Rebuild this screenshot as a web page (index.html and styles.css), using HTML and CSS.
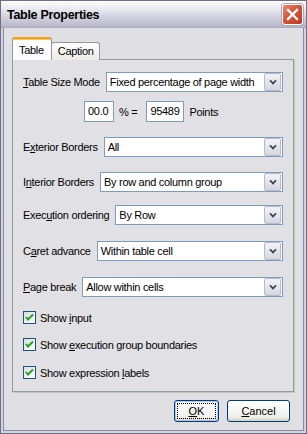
FILE: index.html
```html
<!DOCTYPE html>
<html lang="en">
<head>
    <meta charset="UTF-8" />
    <title>Table Properties</title>
    <link rel="stylesheet" href="styles.css">
</head>
<body>
    <div class="window">
        <div class="titlebar">
            <span class="title">Table Properties</span>
            <span class="closeBtn">
                <svg width="13" height="13" viewBox="0 0 13 13">
                    <path d="M2 2 L11 11 M11 2 L2 11" stroke="#fff" stroke-width="2.4" stroke-linecap="square" />
                </svg>
            </span>
        </div>
        <div class="client">
            <div class="tabs">
                <div class="tab active">Table</div>
                <div class="tab">Caption</div>
            </div>
            <div class="panel">
                <div class="row r1">
                    <label><u>T</u>able Size Mode</label>
                    <div class="combo"><span>Fixed percentage of page width</span><i class="drop"></i></div>
                </div>
                <div class="row numbers">
                    <span class="box small">00.0</span>
                    <span class="eq">% =</span>
                    <span class="box">95489</span>
                    <span>Points</span>
                </div>
                <div class="row r3">
                    <label>E<u>x</u>terior Borders</label>
                    <div class="combo"><span>All</span><i class="drop"></i></div>
                </div>
                <div class="row r4">
                    <label>I<u>n</u>terior Borders</label>
                    <div class="combo"><span>By row and column group</span><i class="drop"></i></div>
                </div>
                <div class="row r5">
                    <label>Exec<u>u</u>tion ordering</label>
                    <div class="combo"><span>By Row</span><i class="drop"></i></div>
                </div>
                <div class="row r6">
                    <label>C<u>a</u>ret advance</label>
                    <div class="combo"><span>Within table cell</span><i class="drop"></i></div>
                </div>
                <div class="row r7">
                    <label><u>P</u>age break</label>
                    <div class="combo"><span>Allow within cells</span><i class="drop"></i></div>
                </div>
                <div class="check c1">
                    <span class="box13"><svg width="11" height="11" viewBox="0 0 11 11"><path d="M2 5 L4 7.5 L9 2.5" fill="none" stroke="#21a121" stroke-width="2" /></svg></span>
                    <span>Show <u>i</u>nput</span>
                </div>
                <div class="check c2">
                    <span class="box13"><svg width="11" height="11" viewBox="0 0 11 11"><path d="M2 5 L4 7.5 L9 2.5" fill="none" stroke="#21a121" stroke-width="2" /></svg></span>
                    <span>Show <u>e</u>xecution group boundaries</span>
                </div>
                <div class="check c3">
                    <span class="box13"><svg width="11" height="11" viewBox="0 0 11 11"><path d="M2 5 L4 7.5 L9 2.5" fill="none" stroke="#21a121" stroke-width="2" /></svg></span>
                    <span>Show expression <u>l</u>abels</span>
                </div>
            </div>
            <div class="buttons">
                <button class="btn default"><span class="focus"><u>O</u>K</span></button>
                <button class="btn cancel"><u>C</u>ancel</button>
            </div>
        </div>
    </div>
</body>
</html>
```

FILE: styles.css
```css
body {
    margin: 0;
    padding: 0;
    font-family: "Liberation Sans", Arial, sans-serif;
    font-size: 11px;
    letter-spacing: -0.3px;
    color: #000;
    background: #fff;
}
.window {
    width: 307px;
    height: 434px;
    box-sizing: border-box;
    border: 1px solid #6e6e88;
    background: #d4d4e0;
    display: flex;
    flex-direction: column;
}
.titlebar {
    height: 27px;
    display: flex;
    align-items: center;
    justify-content: space-between;
    padding: 0 3px 0 6px;
    background: linear-gradient(#fdfdfe 0%, #ececf2 25%, #d2d2de 60%, #babacb 92%, #a8a8bc 100%);
}
.title {
    font-weight: bold;
    font-size: 12.5px;
    letter-spacing: -0.3px;
    padding-top: 1px;
}
.closeBtn {
    width: 19px;
    height: 19px;
    border: 1px solid #fff;
    border-radius: 3px;
    background: linear-gradient(135deg, #e88a72 0%, #d2553a 45%, #b83a22 100%);
    display: flex;
    align-items: center;
    justify-content: center;
    box-shadow: 0 0 0 1px #b0a8b8;
}
.client {
    flex: 1;
    margin: 0 2px 2px;
    border: 1px solid #8a8aa2;
    border-top: none;
    background: #e0dfe3;
    display: flex;
    flex-direction: column;
}
.tabs {
    display: flex;
    align-items: flex-end;
    padding: 9px 0 0 8px;
    position: relative;
    z-index: 1;
    margin-bottom: -1px;
}
.tab {
    height: 17px;
    padding: 0 5px 0 6px;
    line-height: 17px;
    border: 1px solid #919b9c;
    border-bottom: none;
    border-radius: 3px 3px 0 0;
    background: linear-gradient(#ffffff, #ecebe6);
    margin-left: -1px;
}
.tab.active {
    height: 21px;
    line-height: 22px;
    padding: 0 7px 0 6px;
    margin-left: 0;
    border-top: 2px solid #f0a030;
    box-shadow: inset 0 1px 0 #ffc83c;
    background: #fcfcfe;
    z-index: 2;
}
.panel {
    width: 282px;
    height: 333px;
    box-sizing: border-box;
    margin-left: 8px;
    border: 1px solid #919b9c;
    box-shadow: 1px 1px 0 #c4c4c8;
    background: #e1e0e4;
    padding: 0 10px;
    display: flex;
    flex-direction: column;
}
.row {
    display: flex;
    align-items: center;
    gap: 6px;
    white-space: nowrap;
}
.r1 { margin-top: 12px; }
.numbers { margin-top: 9px; padding-left: 61px; gap: 5px; }
.numbers .eq { margin-right: 4px; }
.r3 { margin-top: 15px; }
.r4 { margin-top: 15px; }
.r5 { margin-top: 13px; }
.r6 { margin-top: 16px; }
.r7 { margin-top: 16px; }
.combo {
    flex: 1;
    height: 20px;
    box-sizing: border-box;
    border: 1px solid #7f9db9;
    background: #fff;
    display: flex;
    align-items: center;
    justify-content: space-between;
    padding-left: 3px;
}
.drop {
    width: 15px;
    height: 16px;
    margin-right: 1px;
    border: 1px solid #b9b9c9;
    border-radius: 2px;
    background: linear-gradient(#f2f2f6, #d6d6e2);
    position: relative;
}
.drop::after {
    content: "";
    position: absolute;
    left: 5px;
    top: 4px;
    width: 4px;
    height: 4px;
    border-right: 2px solid #3d3d4d;
    border-bottom: 2px solid #3d3d4d;
    transform: rotate(45deg) scale(0.85);
}
.box {
    height: 21px;
    box-sizing: border-box;
    padding: 0 3px;
    border: 1px solid #7f9db9;
    background: #fff;
    line-height: 19px;
    width: 38px;
}
.box.small {
    width: 30px;
}
.check {
    display: flex;
    align-items: center;
    gap: 4px;
    height: 13px;
    white-space: nowrap;
}
.c1 { margin-top: 14px; }
.c2 { margin-top: 14px; }
.c3 { margin-top: 15px; }
.box13 {
    width: 13px;
    height: 13px;
    box-sizing: border-box;
    border: 1px solid #1c5180;
    background: linear-gradient(135deg, #dcdcd7, #ffffff);
    display: flex;
    align-items: center;
    justify-content: center;
}
.buttons {
    display: flex;
    justify-content: flex-end;
    gap: 8px;
    margin-top: 8px;
    padding-right: 13px;
}
.btn {
    height: 22px;
    box-sizing: border-box;
    border: 1px solid #003c74;
    border-radius: 3px;
    background: linear-gradient(#ffffff, #f0f0ea 80%, #d6d0c5);
    font: inherit;
    padding: 0;
    color: #000;
}
.btn.default {
    width: 45px;
    box-shadow: inset 0 0 0 1px #b4c8f0;
    padding: 2px;
}
.btn.default .focus {
    display: block;
    height: 100%;
    border: 1px dotted #000;
    box-sizing: border-box;
    line-height: 15px;
}
.btn.cancel {
    width: 63px;
}
```
